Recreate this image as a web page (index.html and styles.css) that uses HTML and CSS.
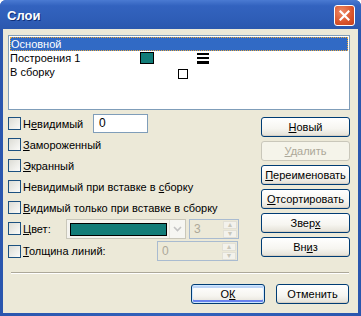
FILE: index.html
```html
<!DOCTYPE html>
<html lang="ru">
<head>
    <meta charset="UTF-8">
    <title>Слои</title>
    <link rel="stylesheet" href="styles.css">
</head>
<body>
<div class="window">
    <div class="titlebar">
        <span class="title">Слои</span>
        <span class="close">
            <svg width="11" height="11" viewBox="0 0 11 11"><path d="M1.5 1.5 L9.5 9.5 M9.5 1.5 L1.5 9.5" stroke="#fff" stroke-width="2.2" stroke-linecap="square"/></svg>
        </span>
    </div>
    <div class="client">
        <div class="layers">
            <div class="layer selected"><span class="name">Основной</span></div>
            <div class="layer">
                <span class="name">Построения 1</span>
                <span class="cell"><span class="swatch"></span></span>
                <span class="cell"></span>
                <span class="cell">
                    <svg width="12" height="11" viewBox="0 0 12 11"><rect x="0" y="0" width="12" height="2" fill="#000"/><rect x="0" y="4" width="12" height="2" fill="#000"/><rect x="0" y="8" width="12" height="3" fill="#000"/></svg>
                </span>
            </div>
            <div class="layer">
                <span class="name">В сборку</span>
                <span class="cell"></span>
                <span class="cell"><span class="box"></span></span>
            </div>
        </div>
        <div class="middle">
            <div class="options">
                <div class="opt">
                    <label class="check w85"><span class="cb"></span><span>Н<u>е</u>видимый</span></label>
                    <span class="field">0</span>
                </div>
                <div class="opt"><label class="check"><span class="cb"></span><span><u>З</u>амороженный</span></label></div>
                <div class="opt"><label class="check"><span class="cb"></span><span><u>Э</u>кранный</span></label></div>
                <div class="opt"><label class="check"><span class="cb"></span><span>Невидимый при вставке в <u>с</u>борку</span></label></div>
                <div class="opt"><label class="check"><span class="cb"></span><span><u>В</u>идимый только при вставке в сборку</span></label></div>
                <div class="opt">
                    <label class="check w58"><span class="cb"></span><span><u>Ц</u>вет:</span></label>
                    <span class="combo">
                        <span class="combo_val"><span class="combo_swatch"></span></span>
                        <span class="combo_btn">
                            <svg width="9" height="6" viewBox="0 0 9 6"><path d="M1 1 L4.5 4.5 L8 1" fill="none" stroke="#c3c3c3" stroke-width="1.6"/></svg>
                        </span>
                    </span>
                    <span class="spin w50"><span class="spin_val">3</span><span class="spin_btns"><span class="arrow">&#9652;</span><span class="arrow">&#9662;</span></span></span>
                </div>
                <div class="opt last">
                    <label class="check w149"><span class="cb"></span><span><u>Т</u>олщина линий:</span></label>
                    <span class="spin w81"><span class="spin_val">0</span><span class="spin_btns"><span class="arrow">&#9652;</span><span class="arrow">&#9662;</span></span></span>
                </div>
            </div>
            <div class="actions">
                <button type="button" class="btn"><u>Н</u>овый</button>
                <button type="button" class="btn disabled"><u>У</u>далить</button>
                <button type="button" class="btn"><u>П</u>ереименовать</button>
                <button type="button" class="btn"><u>О</u>тсортировать</button>
                <button type="button" class="btn">Звер<u>х</u></button>
                <button type="button" class="btn">Вн<u>и</u>з</button>
            </div>
        </div>
        <div class="sep"></div>
        <div class="footer">
            <button type="button" class="btn default">О<u>К</u></button>
            <button type="button" class="btn cancel">Отменить</button>
        </div>
    </div>
</div>
</body>
</html>
```

FILE: styles.css
```css
*{
    padding: 0;
    margin: 0;
    box-sizing: border-box;
}
body{
    background: #fff;
    font-family: "Liberation Sans", Arial, sans-serif;
    font-size: 11px;
    color: #000;
}
.window{
    width: 361px;
    height: 316px;
    display: flex;
    flex-direction: column;
    background: linear-gradient(90deg, #2a56ae, #3262bc 50%, #2a56ae);
    border-radius: 6px 6px 0 0;
    overflow: hidden;
}
.titlebar{
    height: 29px;
    display: flex;
    align-items: center;
    justify-content: space-between;
    padding: 0 6px 0 7px;
    background: linear-gradient(#4a7ad2, #3363bf 20%, #2e5db6 70%, #2b58ae);
}
.title{
    color: #fff;
    font-weight: bold;
    font-size: 13px;
    text-shadow: 1px 1px 0 #0f2f78;
    margin-top: 1px;
}
.close{
    width: 21px;
    height: 21px;
    border: 1px solid #fff;
    border-radius: 3px;
    background: radial-gradient(circle at 35% 30%, #ef8a66, #d9542b 60%, #c2401c);
    display: flex;
    align-items: center;
    justify-content: center;
    margin-top: 1px;
}
.client{
    flex: 1;
    margin: 0 3px 3px 3px;
    background: #ece9d8;
    padding: 6px 8px 9px 5px;
    display: flex;
    flex-direction: column;
}
.layers{
    height: 75px;
    background: #fff;
    border: 1px solid #7f9db9;
    padding: 1px;
}
.layer{
    height: 14px;
    display: grid;
    grid-template-columns: 130px 38px 19px 1fr;
    align-items: center;
    line-height: 14px;
}
.layer.selected{
    background: #316ac5;
    color: #fff;
    border: 1px dotted #e8a83c;
    line-height: 12px;
}
.cell{
    display: flex;
    align-items: center;
    height: 14px;
}
.swatch{
    width: 14px;
    height: 12px;
    background: #127c78;
    border: 1px solid #000;
}
.box{
    width: 10px;
    height: 10px;
    border: 1px solid #000;
    background: #fff;
    margin-top: 4px;
}
.middle{
    margin-top: 3px;
    display: grid;
    grid-template-columns: 1fr 89px;
}
.options{
    display: flex;
    flex-direction: column;
}
.opt{
    height: 21px;
    display: flex;
    align-items: center;
}
.opt.last{
    height: 22px;
    padding-top: 2px;
}
.check{
    display: flex;
    align-items: center;
    gap: 2px;
    white-space: nowrap;
}
.w85{ width: 85px; }
.w58{ width: 58px; }
.w149{ width: 149px; }
.cb{
    width: 13px;
    height: 13px;
    border: 1px solid #1c5180;
    background: linear-gradient(135deg, #dcdcd5, #fbfbf9);
    flex: none;
}
.field{
    width: 55px;
    height: 19px;
    border: 1px solid #7f9db9;
    background: #fff;
    padding-left: 5px;
    line-height: 17px;
    font-size: 12px;
}
.combo{
    width: 120px;
    height: 20px;
    border: 1px solid #c9c7ba;
    background: #f4f3ee;
    display: flex;
    align-items: stretch;
}
.combo_val{
    flex: 1;
    padding: 3px 2px 2px 3px;
}
.combo_swatch{
    display: block;
    height: 100%;
    background: #127c78;
    border: 1px solid #000;
}
.combo_btn{
    width: 16px;
    background: #f6f6f2;
    border-left: 1px solid #e3e2da;
    display: flex;
    align-items: center;
    justify-content: center;
}
.spin{
    height: 20px;
    border: 1px solid #a9bbd0;
    margin-left: 3px;
    display: flex;
    background: #ece9d8;
}
.w50{ width: 50px; }
.w81{ width: 81px; margin-left: 0; }
.spin_val{
    flex: 1;
    color: #aca899;
    padding-left: 4px;
    line-height: 18px;
    font-size: 12px;
}
.spin_btns{
    width: 16px;
    display: flex;
    flex-direction: column;
    padding: 1px;
    gap: 1px;
}
.arrow{
    flex: 1;
    background: #f3f2ec;
    border: 1px solid #e2e0d6;
    color: #c9c7ba;
    font-size: 8px;
    line-height: 6px;
    text-align: center;
}
.actions{
    margin-top: 4px;
    display: flex;
    flex-direction: column;
    gap: 4px;
}
.btn{
    height: 20px;
    font-family: "Liberation Sans", Arial, sans-serif;
    font-size: 11px;
    color: #000;
    border: 1px solid #003c74;
    border-radius: 3px;
    background: linear-gradient(#ffffff, #f6f5f0 60%, #e3e0d6);
    box-shadow: inset 0 -1px 0 #d6d0c5;
}
.btn.disabled{
    border-color: #c9c7ba;
    background: #f5f4ea;
    color: #aca899;
    box-shadow: none;
}
.sep{
    margin: 11px 1px 0 3px;
    height: 2px;
    border-top: 1px solid #aca899;
    border-bottom: 1px solid #fff;
}
.footer{
    margin-top: 10px;
    display: flex;
    justify-content: flex-end;
    gap: 11px;
    padding-right: 1px;
}
.footer .btn{
    width: 73px;
}
.btn.default{
    width: 74px;
    box-shadow: inset 0 0 0 1px #cee7ff, inset 0 -2px 0 1px #6982ee, inset 0 2px 0 1px #bcd4f6;
}
```
